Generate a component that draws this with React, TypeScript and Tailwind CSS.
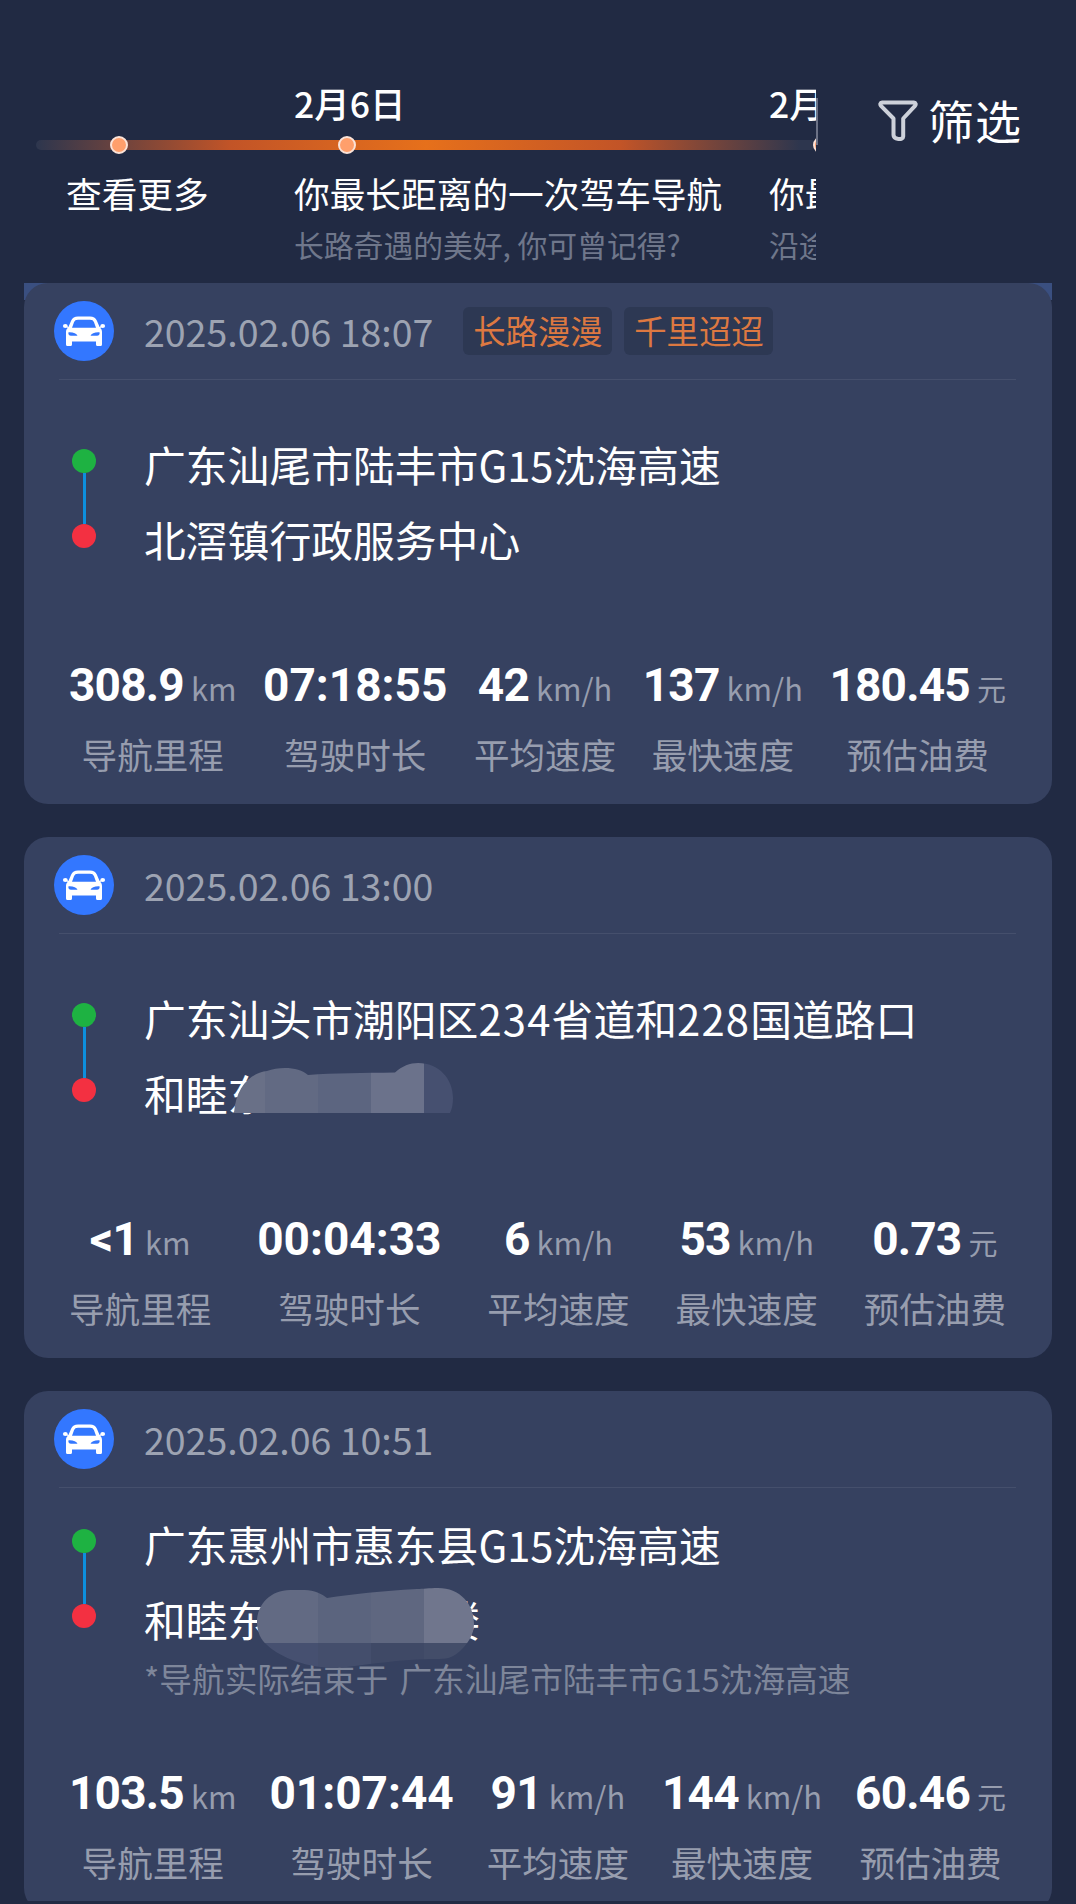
import type { ReactNode } from "react"

type Stat = { value: string; unit?: string; label: string }

type Trip = {
  time: string
  tags?: string[]
  from: ReactNode
  to: ReactNode
  note?: string
  stats: Stat[]
}

const LABELS = ["导航里程", "驾驶时长", "平均速度", "最快速度", "预估油费"]
const UNITS = ["km", undefined, "km/h", "km/h", "元"]

const buildStats = (values: string[]): Stat[] =>
  values.map((value, i) => ({ value, unit: UNITS[i], label: LABELS[i] }))

const TRIPS: Trip[] = [
  {
    time: "2025.02.06 18:07",
    tags: ["长路漫漫", "千里迢迢"],
    from: "广东汕尾市陆丰市G15沈海高速",
    to: "北滘镇行政服务中心",
    stats: buildStats(["308.9", "07:18:55", "42", "137", "180.45"]),
  },
  {
    time: "2025.02.06 13:00",
    from: (
      <>
        广东汕头市潮阳区<span className="tracking-[1.2px]">234</span>省道和
        <span className="tracking-[1.2px]">228</span>国道路口
      </>
    ),
    to: (
      <>
        和睦东
        <MaskShort />
      </>
    ),
    stats: buildStats(["<1", "00:04:33", "6", "53", "0.73"]),
  },
  {
    time: "2025.02.06 10:51",
    from: "广东惠州市惠东县G15沈海高速",
    to: (
      <>
        和睦东<span className="ml-[169px]">楼</span>
        <MaskLong />
      </>
    ),
    note: "*导航实际结束于 广东汕尾市陆丰市G15沈海高速",
    stats: buildStats(["103.5", "01:07:44", "91", "144", "60.46"]),
  },
]

/* ─── Mosaic masks over private addresses ─── */
function MaskShort() {
  return (
    <svg className="absolute top-[7px] left-[90px]" width="220" height="51" viewBox="0 0 220 51">
      <defs>
        <clipPath id="maskShort">
          <path d="M0 50C2 24 16 10 33 8C46 3 66 4 74 12C100 10 130 10 161 9.500C168 3 176 0 184 0C205 0 219 16 219 35C219 41 218 46 216 50Z" />
        </clipPath>
      </defs>
      <g clipPath="url(#maskShort)">
        <rect width="31" height="50" fill="#697087" />
        <rect x="31" width="53" height="50" fill="#626a83" />
        <rect x="84" width="53" height="50" fill="#5c6580" />
        <rect x="137" width="53" height="50" fill="#6b728b" />
        <rect x="190" width="30" height="50" fill="#465070" />
      </g>
    </svg>
  )
}

function MaskLong() {
  return (
    <svg className="absolute top-[6px] left-[113px]" width="218" height="81" viewBox="0 0 218 81">
      <defs>
        <clipPath id="maskLong">
          <path d="M0 34C0 16 14 2 33 2H48C57 2 65 6 70 10C96 6 124 3 160 1C166 1 172 0 181 0C203 0 217 16 217 36C217 46 211 55 206 60C199 68 192 71 182 71C140 71 112 77 80 80C50 80 24 70 10 57C4 52 0 44 0 34Z" />
        </clipPath>
      </defs>
      <g clipPath="url(#maskLong)">
        <rect width="61" height="55" fill="#626a83" />
        <rect x="61" width="53" height="55" fill="#5b647e" />
        <rect x="114" width="53" height="55" fill="#5f6780" />
        <rect x="167" width="51" height="55" fill="#70768d" />
        <rect y="55" width="61" height="26" fill="#465070" />
        <rect x="61" y="55" width="53" height="26" fill="#444e6c" />
        <rect x="114" y="55" width="53" height="26" fill="#3f4966" />
        <rect x="167" y="55" width="51" height="26" fill="#434d69" />
      </g>
    </svg>
  )
}

/* ─── Icons ─── */
function CarIcon() {
  return (
    <svg className="shrink-0" width="60" height="60" viewBox="0 0 60 60">
      <circle cx="30" cy="30" r="30" fill="#3377ff" />
      <path
        fill="#fff"
        fillRule="evenodd"
        d="M24 15.500H36C39.500 15.500 41.500 16.800 42.800 19.500L45.800 26.500C47.400 27.700 48 29.200 48 31V43.500Q48 45 46.500 45H43.500Q42 45 42 43.500V40.500H18V43.500Q18 45 16.500 45H13.500Q12 45 12 43.500V31C12 29.200 12.600 27.700 14.200 26.500L17.200 19.500C18.500 16.800 20.500 15.500 24 15.500ZM24 18.800C21.800 18.800 20.700 19.600 20 21.300L18 26.800H42L40 21.300C39.300 19.600 38.200 18.800 36 18.800ZM14.500 31.300C14 33.300 15 34.800 17 34.800H23.500C22.500 32.300 19 31 14.500 31.300ZM45.500 31.300C41 31 37.500 32.300 36.500 34.800H43C45 34.800 46 33.300 45.500 31.300Z"
      />
      <ellipse cx="11.300" cy="25" rx="2.400" ry="2" fill="#fff" />
      <ellipse cx="48.700" cy="25" rx="2.400" ry="2" fill="#fff" />
      <path d="M12 25.300L15 27M48 25.300L45 27" stroke="#fff" strokeWidth="1.200" />
    </svg>
  )
}

function FilterIcon() {
  return (
    <svg className="mt-[4px]" width="40" height="42" viewBox="0 0 40 42" fill="none">
      <path
        d="M4 2.500H36C37.800 2.500 38.200 4.500 37 5.800L25.200 18.500V36.500C25.200 40.500 15.500 39.500 15.500 35V18.500L3 5.800C1.800 4.500 2.200 2.500 4 2.500Z"
        stroke="#cdd1da"
        strokeWidth="4"
        strokeLinejoin="round"
      />
    </svg>
  )
}

/* ─── Timeline header ─── */
type TimelineNodeProps = { date?: string; title: string; subtitle?: string; className: string }

function TimelineNode({ date, title, subtitle, className }: TimelineNodeProps) {
  return (
    <div className={`flex shrink-0 flex-col whitespace-nowrap ${className}`}>
      <p className="h-[54px] text-[35.500px] leading-[54px] font-medium text-white">{date}</p>
      <div className="mt-[2px] flex h-[26px] items-center pl-[44px]">
        <span className="size-[18px] rounded-full border-2 border-[#fbe3d8] bg-[#ff9f6c]" />
      </div>
      <p className="mt-[8px] h-[54px] text-[35.700px] leading-[54px] text-white">{title}</p>
      <p className="mt-px h-[46px] text-[29.800px] leading-[46px] text-[#6f778b]">{subtitle}</p>
    </div>
  )
}

function Header() {
  return (
    <header className="flex h-[283px] pt-[76px]">
      <div className="relative h-[207px] w-[816px] overflow-hidden">
        <div className="absolute top-[64px] left-9 h-[10px] w-[780px] rounded-full bg-[linear-gradient(90deg,#2d364e_0%,#c25427_25%,#e6701b_50%,#c25427_75%,#2d364e_98%)]" />
        <div className="relative flex pl-[66px]">
          <TimelineNode className="w-[228px]" title="查看更多" />
          <TimelineNode
            className="w-[475px]"
            date="2月6日"
            title="你最长距离的一次驾车导航"
            subtitle="长路奇遇的美好, 你可曾记得?"
          />
          <TimelineNode className="w-[300px]" date="2月5日" title="你最快速度" subtitle="沿途风景" />
        </div>
      </div>
      <div className="mt-[22px] h-[47px] w-[2px] bg-[#6c7286]" />
      <button className="mt-[11px] ml-[60px] flex h-[64px] items-center gap-[10px] text-[46px] leading-none tracking-[1px] text-white">
        <FilterIcon />
        筛选
      </button>
    </header>
  )
}

/* ─── Trip card ─── */
function TripCard({ trip }: { trip: Trip }) {
  return (
    <article className="flex h-[521px] shrink-0 flex-col rounded-[24px] bg-[#364160] pb-[23px]">
      <div className="flex h-24 shrink-0 items-center pl-[30px]">
        <CarIcon />
        <time className="ml-[30px] text-[37.500px] leading-none text-[#9da3b2]">{trip.time}</time>
        {trip.tags && (
          <div className="ml-[30px] flex gap-3">
            {trip.tags.map((tag) => (
              <span
                key={tag}
                className="flex h-[48px] w-[149px] items-center justify-center rounded-md bg-[#2d3853] pb-[2px] text-[32.400px] leading-none text-[#dd7841]"
              >
                {tag}
              </span>
            ))}
          </div>
        )}
      </div>
      <div className="mr-9 ml-[35px] h-px shrink-0 bg-[#454f6c]" />

      <div className={`flex pl-[48px] ${trip.note ? "pt-[19px]" : "pt-[47px]"}`}>
        <div className="mt-[22px] flex h-[99px] w-6 flex-col items-center">
          <span className="size-6 shrink-0 rounded-full bg-[#1eb242]" />
          <span className="w-[3px] flex-1 bg-[#0d8fdd]" />
          <span className="size-6 shrink-0 rounded-full bg-[#f33041]" />
        </div>
        <div className="ml-12 text-[41.800px] leading-[75px] whitespace-nowrap text-white">
          <p>{trip.from}</p>
          <p className="relative">{trip.to}</p>
          {trip.note && (
            <p className="-mt-[2px] text-[32.700px] leading-[46px] text-[#7e869a] [word-spacing:4px]">{trip.note}</p>
          )}
        </div>
      </div>

      <div className="mt-auto flex justify-between pr-[46px] pl-[45px]">
        {trip.stats.map((stat) => (
          <div key={stat.label} className="flex flex-col items-center whitespace-nowrap">
            <p className="mb-[12px] flex h-[60px] items-baseline gap-[7px] leading-[60px]">
              <span
                className={`font-['Roboto'] text-[46px] font-bold text-white ${stat.unit ? "tracking-[-0.8px]" : ""}`}
              >
                {stat.value}
              </span>
              {stat.unit && (
                <span className={stat.unit === "元" ? "text-[29px] text-[#979dae]" : "text-[30.800px] text-[#979dae]"}>
                  {stat.unit}
                </span>
              )}
            </p>
            <p className="text-[35.600px] leading-[54px] text-[#979dae]">{stat.label}</p>
          </div>
        ))}
      </div>
    </article>
  )
}

export default function App() {
  return (
    <div className="h-[1904px] w-[1076px] overflow-hidden bg-[#212a43] font-['Noto_Sans_CJK_SC',sans-serif]">
      <Header />
      <main className="h-[1618px] overflow-hidden px-6">
        <div className="flex flex-col gap-[33px] bg-[linear-gradient(#3a4f80_0px,#3a4f80_17px,transparent_17px)]">
          {TRIPS.map((trip) => (
            <TripCard key={trip.time} trip={trip} />
          ))}
        </div>
      </main>
    </div>
  )
}
